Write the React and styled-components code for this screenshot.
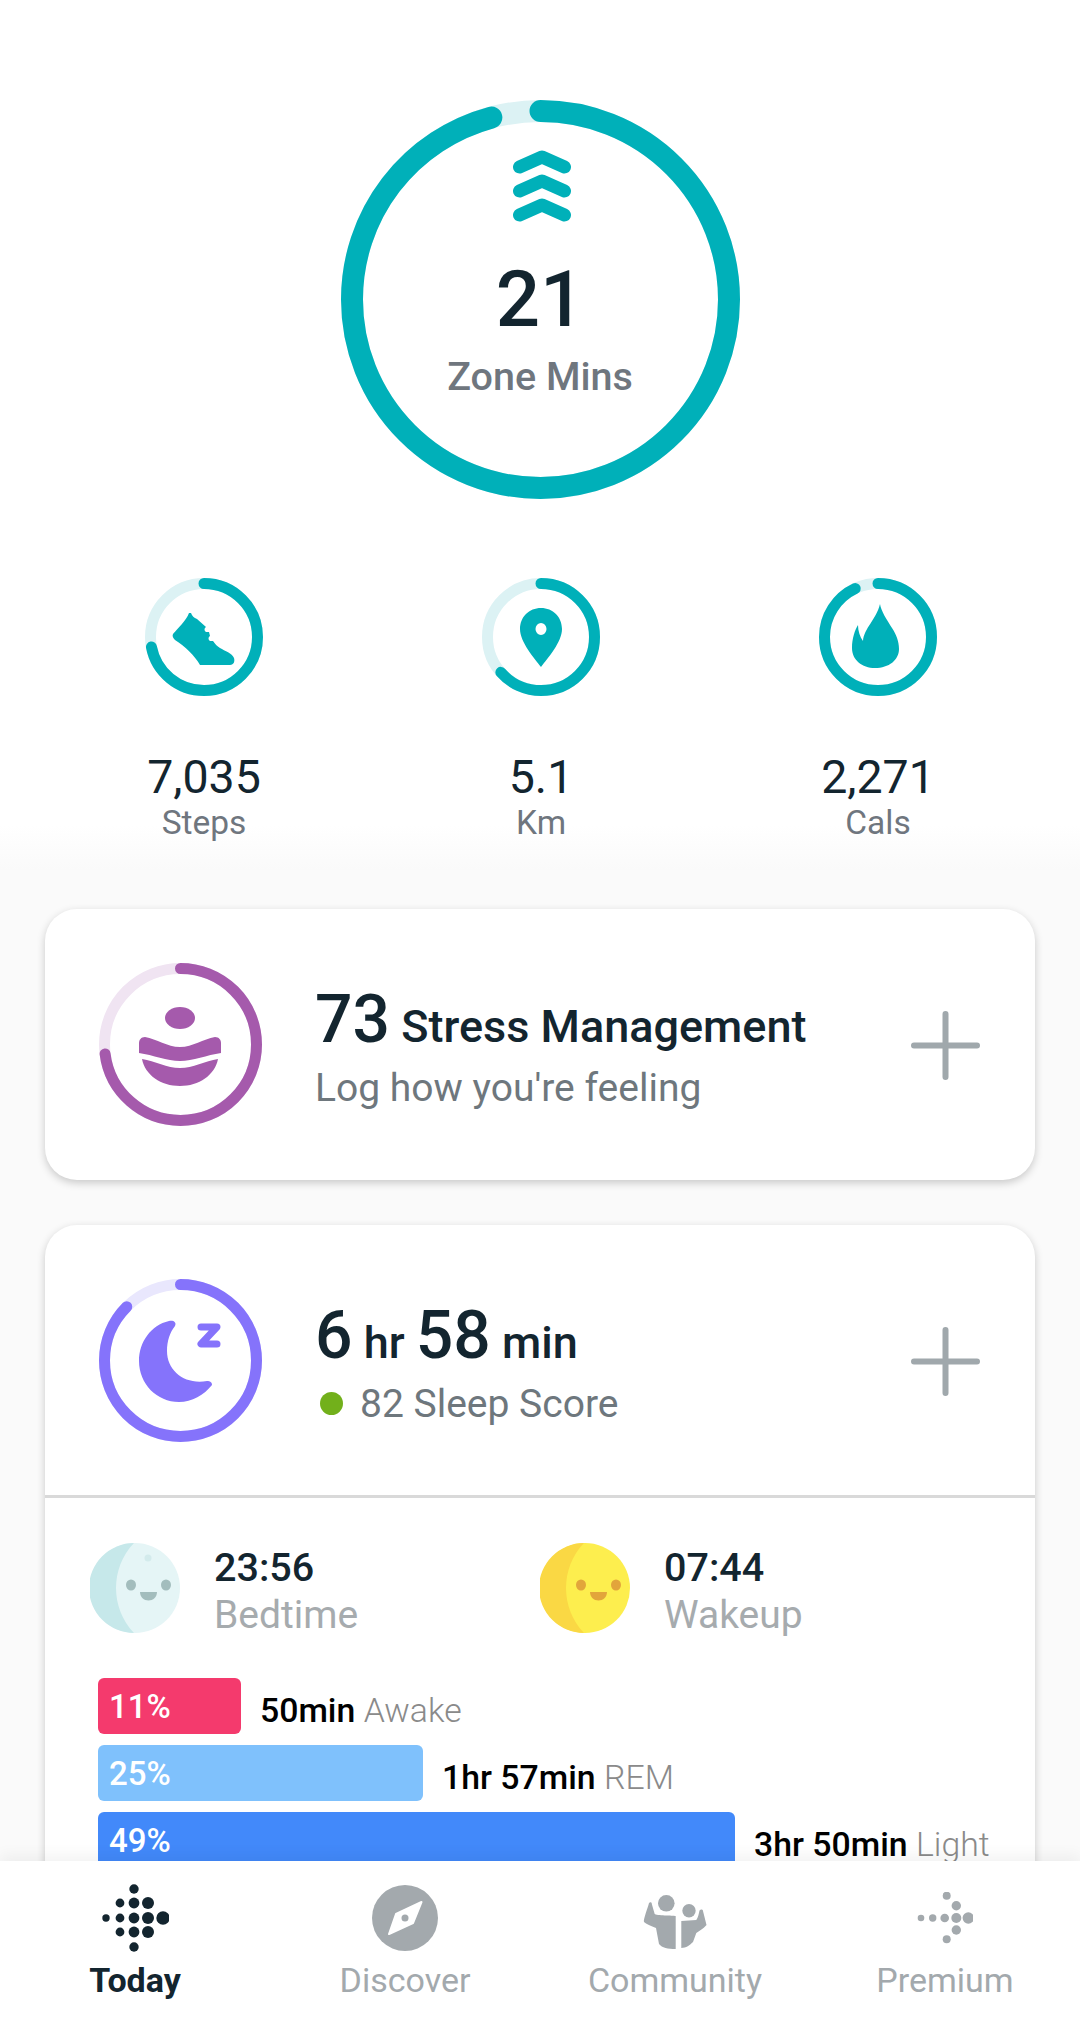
import React from 'react';
import styled, { createGlobalStyle } from 'styled-components';

const GlobalStyle = createGlobalStyle`
  html, body {
    margin: 0;
    padding: 0;
    background: #fff;
    font-family: Roboto, "Liberation Sans", sans-serif;
  }
`;

const TEAL = '#00b0b9';
const TEAL_TRACK = '#dcf2f4';
const INK = '#13252f';

const Page = styled.div`
  position: relative;
  width: 1080px;
  height: 2018px;
  overflow: hidden;
  background: linear-gradient(#fff 825px, #fafafa 870px);
`;

const Hero = styled.section`
  display: flex;
  justify-content: center;
  padding-top: 100px;
`;

const HeroRing = styled.div`
  display: grid;
  width: 399px;
  height: 399px;
  & > * {
    grid-area: 1 / 1;
  }
`;

const HeroContent = styled.div`
  display: flex;
  flex-direction: column;
  align-items: center;
  padding-top: 50px;
`;

const Chevrons = styled.svg`
  margin-left: 4px;
`;

const HeroValue = styled.div`
  margin-top: 31px;
  font-size: 78px;
  line-height: 90px;
  font-weight: 500;
  color: ${INK};
`;

const HeroLabel = styled.div`
  margin-top: 9px;
  font-size: 39.5px;
  line-height: 46px;
  font-weight: 500;
  color: #6f767e;
`;

const Stats = styled.section`
  display: grid;
  grid-template-columns: repeat(3, 337px);
  justify-content: center;
  margin-top: 79px;
  padding-left: 2px;
`;

const Stat = styled.div`
  display: flex;
  flex-direction: column;
  align-items: center;
`;

const StatRing = styled.div`
  display: grid;
  width: 118px;
  height: 118px;
  margin-bottom: 56px;
  & > * {
    grid-area: 1 / 1;
  }
`;

const StatValue = styled.div`
  font-size: 46.5px;
  line-height: 50px;
  color: ${INK};
`;

const StatLabel = styled.div`
  margin-top: 2px;
  font-size: 33.5px;
  line-height: 38px;
  color: #6f767e;
`;

const Cards = styled.section`
  display: flex;
  flex-direction: column;
  gap: 45px;
  margin: 67px 45px 0;
`;

const Card = styled.article`
  background: #fff;
  border-radius: 32px 32px ${(p) => (p.$open ? '0 0' : '32px 32px')};
  box-shadow: 0 3px 9px rgba(0, 0, 0, 0.2);
`;

const CardHeader = styled.div`
  display: flex;
  align-items: center;
  gap: 53px;
  height: ${(p) => (p.$open ? 270 : 271)}px;
  padding: 0 55px 0 54px;
  box-sizing: border-box;
`;

const CardRing = styled.div`
  display: grid;
  flex: none;
  width: 163px;
  height: 163px;
  & > * {
    grid-area: 1 / 1;
  }
`;

const CardText = styled.div`
  flex: 1;
  min-width: 0;
  padding-top: 4px;
`;

const Headline = styled.div`
  font-size: 45px;
  line-height: 76px;
  font-weight: 500;
  color: ${INK};
  white-space: nowrap;
`;

const Big = styled.span`
  font-size: 66px;
`;

const Sub = styled.div`
  display: flex;
  align-items: center;
  font-size: 39px;
  line-height: 46px;
  color: #6e777d;
`;

const ScoreDot = styled.span`
  width: 23px;
  height: 23px;
  margin: 0 17px 0 5px;
  border-radius: 50%;
  background: #72b01b;
`;

const PlusIcon = styled.svg`
  flex: none;
  width: 69px;
  height: 69px;
  margin-top: 2px;
`;

const Divider = styled.div`
  height: 3px;
  background: #d9d9d9;
`;

const SleepBody = styled.div`
  padding: 45px 0 0 45px;
`;

const Times = styled.div`
  display: grid;
  grid-template-columns: repeat(2, 450px);
`;

const TimeItem = styled.div`
  display: flex;
  align-items: flex-start;
  gap: 34px;
`;

const TimeText = styled.div`
  padding-top: 3px;
`;

const TimeValue = styled.div`
  font-size: 39.5px;
  line-height: 44px;
  font-weight: 500;
  color: ${INK};
`;

const TimeLabel = styled.div`
  margin-top: 3px;
  font-size: 39px;
  line-height: 44px;
  color: #a6abae;
`;

const Bars = styled.div`
  display: flex;
  flex-direction: column;
  gap: 11px;
  margin: 41px 0 0 8px;
`;

const BarRow = styled.div`
  display: flex;
  align-items: center;
  gap: 19px;
`;

const Bar = styled.div`
  box-sizing: border-box;
  flex: none;
  width: ${(p) => p.$width}px;
  height: 56px;
  padding-left: 11px;
  border-radius: 6px;
  background: ${(p) => p.$color};
  color: #fff;
  font-size: 33px;
  font-weight: 500;
  line-height: 58px;
`;

const BarText = styled.div`
  padding-top: 9px;
  font-size: 33.8px;
  font-weight: 500;
  color: #000;
  white-space: nowrap;
`;

const BarStage = styled.span`
  font-weight: 300;
  color: #8a8a8a;
`;

const TabBar = styled.nav`
  position: absolute;
  left: 0;
  right: 0;
  bottom: 0;
  display: grid;
  grid-template-columns: repeat(4, 270px);
  height: 157px;
  padding-top: 23px;
  box-sizing: border-box;
  background: #fff;
  box-shadow: 0 -6px 14px rgba(0, 0, 0, 0.05);
`;

const Tab = styled.div`
  display: flex;
  flex-direction: column;
  align-items: center;
  color: ${(p) => (p.$active ? INK : '#a3a9ad')};
  font-size: 34px;
  line-height: 40px;
  font-weight: ${(p) => (p.$active ? 700 : 400)};
`;

const TabIcon = styled.div`
  display: flex;
  align-items: center;
  justify-content: center;
  height: 68px;
  margin-bottom: 8px;
`;

const CommunitySvg = styled.svg`
  margin-top: 8px;
`;

function Ring({ size, stroke, color, track, pct }) {
  const r = (size - stroke) / 2;
  const c = size / 2;
  return (
    <svg width={size} height={size} viewBox={`0 0 ${size} ${size}`}>
      <circle cx={c} cy={c} r={r} fill="none" stroke={track} strokeWidth={stroke} />
      <circle
        cx={c}
        cy={c}
        r={r}
        fill="none"
        stroke={color}
        strokeWidth={stroke}
        strokeLinecap="round"
        pathLength={100}
        strokeDasharray={`${pct} 100`}
        transform={`rotate(-90 ${c} ${c})`}
      />
    </svg>
  );
}

const ShoeGlyph = () => (
  <svg width={118} height={118} viewBox="0 0 118 118">
    <path
      fill={TEAL}
      d="M44 35C41 43 33 50 28 56C27 58 28 60 30 62C40 68 50 78 55 87L85 87C89 87 90 83 89 80C87 75 80 73 75 70C72 68 70 66 68 63L65 63C63 62 63 59 65 58L64 54L61 54C59 53 59 50 61 49L52 41C49 40 47 38 46 35Z"
    />
  </svg>
);

const PinGlyph = () => (
  <svg width={118} height={118} viewBox="0 0 118 118">
    <path
      fill={TEAL}
      fillRule="evenodd"
      d="M59 30C47 30 38 39 38 51C38 64 52 80 59 89C66 80 80 64 80 51C80 39 71 30 59 30ZM59 45A5.5 6 0 1 1 59 57A5.5 6 0 1 1 59 45Z"
    />
  </svg>
);

const FlameGlyph = () => (
  <svg width={118} height={118} viewBox="0 0 118 118">
    <path
      fill={TEAL}
      d="M61 26C62 33 68 42 73 50C77 56 80 63 80 71C80 82 70 90 56 90C43 90 33 82 33 70C33 60 36 52 39 47C39 53 41 59 44 63C45 50 57 42 61 26Z"
    />
  </svg>
);

const StressGlyph = () => (
  <svg width={163} height={163} viewBox="0 0 163 163">
    <g fill="#a55aac">
      <ellipse cx={81} cy={55} rx={15} ry={11} />
      <path d="M46 74C58 76 68 84 81 84C94 84 104 76 116 74C120 74 122 77 122 80L122 90C108 92 94 98 81 98C68 98 54 92 40 90L40 80C40 77 42 74 46 74Z" />
      <path d="M43 96C56 98 68 105 81 105C94 105 106 98 119 96C116 112 100 123 81 123C62 123 46 112 43 96Z" />
    </g>
  </svg>
);

const SleepGlyph = () => (
  <svg width={163} height={163} viewBox="0 0 163 163">
    <path
      fill="#8573fb"
      d="M70 42C52 46 40 63 40 82C40 105 58 123 80 123C93 123 105 116 113 106C113 103 111 102 108 102C86 106 68 92 68 72C68 62 71 53 76 47C78 43 74 41 70 42Z"
    />
    <path
      fill="none"
      stroke="#8573fb"
      strokeWidth={7}
      strokeLinecap="round"
      strokeLinejoin="round"
      d="M102 48H118L102 65H118"
    />
  </svg>
);

const Plus = () => (
  <PlusIcon viewBox="0 0 69 69">
    <path stroke="#a0a8ac" strokeWidth={6} strokeLinecap="round" d="M34.5 3V66M3 34.5H66" />
  </PlusIcon>
);

function Face({ base, shade, feature, crater }) {
  return (
    <svg width={90} height={90} viewBox="0 0 90 90">
      <circle cx={45} cy={45} r={45} fill={base} />
      <path fill={shade} d="M44 0A45 45 0 0 0 44 90C20 65 20 25 44 0Z" />
      {crater && <circle cx={58} cy={15} r={3.5} fill={crater} />}
      <ellipse cx={41} cy={42} rx={5} ry={5.5} fill={feature} />
      <ellipse cx={76} cy={42} rx={5} ry={5.5} fill={feature} />
      <path fill={feature} d="M50 49H67C67 54 63 57.500 58.500 57.500C54 57.500 50 54 50 49Z" />
    </svg>
  );
}

const logoDots = [
  [73, 19, 4.7], [59, 33, 4.4], [73, 33, 5.4], [87, 33, 6], [45, 48, 3.7], [59, 48, 4.4],
  [73, 48, 5.4], [87, 48, 6], [102, 48, 6.7], [59, 62, 4.4], [73, 62, 5.4], [87, 62, 6],
  [73, 77, 4.7],
];

const TodayIcon = () => (
  <svg width={68} height={68} viewBox="40 14 68 68">
    {logoDots.map(([x, y, r]) => (
      <circle key={`${x}-${y}`} cx={x} cy={y} r={r} fill={INK} />
    ))}
  </svg>
);

const CompassIcon = () => (
  <svg width={66} height={66} viewBox="0 0 66 66">
    <circle cx={33} cy={33} r={33} fill="#a3a9ad" />
    <path
      fill="#fff"
      stroke="#fff"
      strokeWidth={2}
      strokeLinejoin="round"
      d="M49.500 17L41 38L17 49L24 29Z"
    />
    <circle cx={33} cy={33} r={3.5} fill="#a3a9ad" />
  </svg>
);

const CommunityIcon = () => (
  <CommunitySvg width={64} height={54} viewBox="0 0 64 54">
    <g fill="#a3a9ad">
      <circle cx={23.300} cy={8.300} r={8.300} />
      <circle cx={46} cy={15.700} r={6.700} />
      <path d="M6 8C7 6.500 9 7 8.800 9L11.700 19C13 20.500 30 20.500 32.700 21L32.700 54C25 54 19 53 16 49L13 33C8 31 3 29 1 27C0 25 5 12 6 8Z" />
      <path d="M38.300 26L53.300 25C55 23 56 18 56.500 15.500C57.500 14 60 14 60 16L63.500 30C60 34 56 36 53.300 38L50 47C47 50 43 53 38.300 53Z" />
    </g>
  </CommunitySvg>
);

const premiumDots = [
  [35.700, 3.700, 4], [45.300, 13.700, 4.700], [10, 26, 3.300], [21.700, 26, 3.700], [33.700, 26, 4.300],
  [45.300, 26, 5], [57.300, 26, 5.700], [45.300, 38, 4.700], [35.700, 47.300, 4],
];

const PremiumIcon = () => (
  <svg width={56} height={52} viewBox="6 0 56 52">
    {premiumDots.map(([x, y, r]) => (
      <circle key={`${x}-${y}`} cx={x} cy={y} r={r} fill="#a3a9ad" />
    ))}
  </svg>
);

const stats = [
  { value: '7,035', label: 'Steps', pct: 72, glyph: <ShoeGlyph /> },
  { value: '5.1', label: 'Km', pct: 63.5, glyph: <PinGlyph /> },
  { value: '2,271', label: 'Cals', pct: 93, glyph: <FlameGlyph /> },
];

const sleepBars = [
  { pct: '11%', width: 143, color: '#f43a6d', time: '50min', stage: 'Awake' },
  { pct: '25%', width: 325, color: '#7fc1fc', time: '1hr 57min', stage: 'REM' },
  { pct: '49%', width: 637, color: '#4289fa', time: '3hr 50min', stage: 'Light' },
];

const tabs = [
  { label: 'Today', icon: <TodayIcon />, active: true },
  { label: 'Discover', icon: <CompassIcon /> },
  { label: 'Community', icon: <CommunityIcon /> },
  { label: 'Premium', icon: <PremiumIcon /> },
];

export default function App() {
  return (
    <>
      <GlobalStyle />
      <Page>
        <Hero>
          <HeroRing>
            <Ring size={399} stroke={22} color={TEAL} track={TEAL_TRACK} pct={95.8} />
            <HeroContent>
              <Chevrons width={60} height={74} viewBox="0 0 60 74">
                <path
                  fill="none"
                  stroke={TEAL}
                  strokeWidth={13}
                  strokeLinecap="round"
                  strokeLinejoin="round"
                  d="M7.500 17L30 7L52.500 17M7.500 41L30 31L52.500 41M7.500 65L30 55L52.500 65"
                />
              </Chevrons>
              <HeroValue>21</HeroValue>
              <HeroLabel>Zone Mins</HeroLabel>
            </HeroContent>
          </HeroRing>
        </Hero>

        <Stats>
          {stats.map((s) => (
            <Stat key={s.label}>
              <StatRing>
                <Ring size={118} stroke={11} color={TEAL} track={TEAL_TRACK} pct={s.pct} />
                {s.glyph}
              </StatRing>
              <StatValue>{s.value}</StatValue>
              <StatLabel>{s.label}</StatLabel>
            </Stat>
          ))}
        </Stats>

        <Cards>
          <Card>
            <CardHeader>
              <CardRing>
                <Ring size={163} stroke={11} color="#a55aac" track="#f0e4f2" pct={73} />
                <StressGlyph />
              </CardRing>
              <CardText>
                <Headline>
                  <Big>73</Big> Stress Management
                </Headline>
                <Sub>Log how you're feeling</Sub>
              </CardText>
              <Plus />
            </CardHeader>
          </Card>

          <Card $open>
            <CardHeader $open>
              <CardRing>
                <Ring size={163} stroke={11} color="#8573fb" track="#e9e7fd" pct={87.5} />
                <SleepGlyph />
              </CardRing>
              <CardText>
                <Headline>
                  <Big>6</Big> hr <Big>58</Big> min
                </Headline>
                <Sub>
                  <ScoreDot />
                  82 Sleep Score
                </Sub>
              </CardText>
              <Plus />
            </CardHeader>
            <Divider />
            <SleepBody>
              <Times>
                <TimeItem>
                  <Face base="#e5f5f6" shade="#c6e8ea" feature="#a3bdbd" crater="#d3ebec" />
                  <TimeText>
                    <TimeValue>23:56</TimeValue>
                    <TimeLabel>Bedtime</TimeLabel>
                  </TimeText>
                </TimeItem>
                <TimeItem>
                  <Face base="#fdee4e" shade="#fad844" feature="#e2a53b" />
                  <TimeText>
                    <TimeValue>07:44</TimeValue>
                    <TimeLabel>Wakeup</TimeLabel>
                  </TimeText>
                </TimeItem>
              </Times>
              <Bars>
                {sleepBars.map((b) => (
                  <BarRow key={b.stage}>
                    <Bar $color={b.color} $width={b.width}>
                      {b.pct}
                    </Bar>
                    <BarText>
                      {b.time} <BarStage>{b.stage}</BarStage>
                    </BarText>
                  </BarRow>
                ))}
              </Bars>
            </SleepBody>
          </Card>
        </Cards>

        <TabBar>
          {tabs.map((t) => (
            <Tab key={t.label} $active={t.active}>
              <TabIcon>{t.icon}</TabIcon>
              {t.label}
            </Tab>
          ))}
        </TabBar>
      </Page>
    </>
  );
}
